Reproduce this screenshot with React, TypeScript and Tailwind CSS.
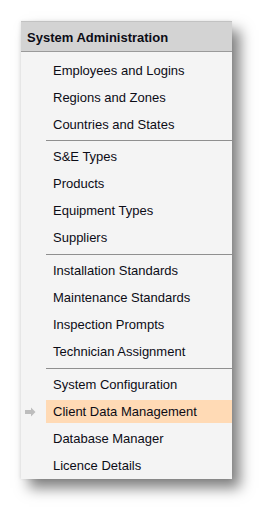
const groups: string[][] = [
  ['Employees and Logins', 'Regions and Zones', 'Countries and States'],
  ['S&E Types', 'Products', 'Equipment Types', 'Suppliers'],
  ['Installation Standards', 'Maintenance Standards', 'Inspection Prompts', 'Technician Assignment'],
  ['System Configuration', 'Client Data Management', 'Database Manager', 'Licence Details'],
]

const ACTIVE = 'Client Data Management'

function Arrow() {
  return (
    <svg width="11" height="10" viewBox="0 0 11 10" className="ml-[4px]">
      <path d="M0 3 H6 V0.5 L10.5 5 L6 9.5 V7 H0 Z" fill="#bdbdbd" />
    </svg>
  )
}

export default function App() {
  return (
    <div className="min-h-[520px] bg-white pt-[21px] pl-[21px] font-['Liberation_Sans',Arial,sans-serif] text-[13px] text-[#0c0c16]">
      <div className="w-[211px] bg-[#f4f4f4] shadow-[8px_9px_13px_rgba(0,0,0,0.5),-1px_0_3px_rgba(0,0,0,0.08)]">
        <div className="h-[31px] bg-[#d3d3d3] border-t border-t-[#c2c2c2] border-b border-b-[#9a9a9a] pl-[6px] pt-[2px] flex items-center font-bold">
          System Administration
        </div>
        {groups.map((items, gi) => {
          const last = gi === groups.length - 1
          return (
            <div key={gi}>
              <div className={gi === 0 ? 'pt-[5px] pb-[2px]' : last ? 'pt-[2px]' : 'pt-[2px] pb-[3px]'}>
                {items.map(label => {
                  const active = label === ACTIVE
                  return (
                    <div key={label} className="flex items-center h-[27px]">
                      <div className="w-[25px] flex items-center">{active && <Arrow />}</div>
                      <div
                        className={`flex-1 h-[23px] leading-[23px] pl-[7px] whitespace-nowrap ${
                          active ? 'bg-[#ffdab5]' : ''
                        }`}
                      >
                        {label}
                      </div>
                    </div>
                  )
                })}
              </div>
              {!last && <div className="ml-[25px] h-px bg-[#8f8f8f]" />}
            </div>
          )
        })}
      </div>
    </div>
  )
}
